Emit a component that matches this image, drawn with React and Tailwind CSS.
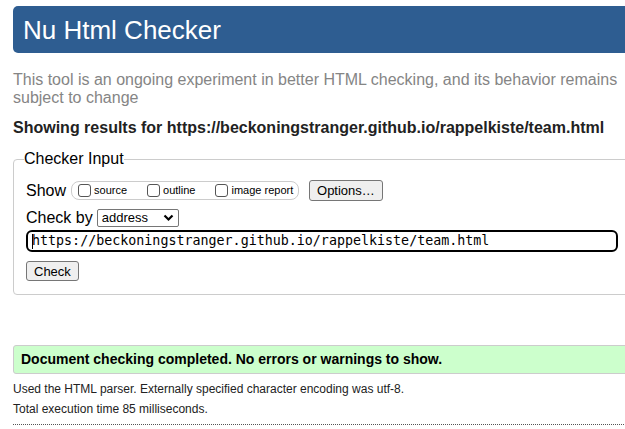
export default function App() {
  return (
    <div className="w-[625px] h-[429px] overflow-hidden bg-white">
      <div className="w-[680px] pl-[13px] pt-[6px] font-['Liberation_Sans',Arial,sans-serif]">
        {/* header */}
        <div className="h-[47px] bg-[#2e5d91] rounded-[5px] pl-[10px] flex items-center">
          <h1 className="text-white text-[26px] leading-none pt-[1px]">Nu Html Checker</h1>
        </div>

        <p className="mt-[18px] w-[608px] text-[16px] leading-[18px] text-[#858585]">
          This tool is an ongoing experiment in better HTML checking, and its behavior remains subject to change
        </p>

        <p className="mt-[11px] text-[16px] leading-[20px] font-bold text-[#222]">
          Showing results for https://beckoningstranger.github.io/rappelkiste/team.html
        </p>

        {/* checker input */}
        <fieldset className="mt-[12px] w-[618px] border border-[#cccccc] rounded-[4px] px-[12px] pb-[11px] pt-0 text-black">
          <legend className="text-[16px] leading-[18px] px-0 ml-[-2px]">Checker Input</legend>
          <div className="flex items-center mt-[12px] h-[21px]">
            <span className="text-[16px] leading-[20px]">Show</span>
            <div className="ml-[5px] w-[228px] h-[19px] border border-[#cccccc] rounded-[8px] flex items-center pl-[6px] text-[11px]">
              <span className="w-[13px] h-[13px] border border-[#555] rounded-[3px] bg-white"></span>
              <span className="ml-[3px]">source</span>
              <span className="ml-[20px] w-[13px] h-[13px] border border-[#555] rounded-[3px] bg-white"></span>
              <span className="ml-[3px]">outline</span>
              <span className="ml-[20px] w-[13px] h-[13px] border border-[#555] rounded-[3px] bg-white"></span>
              <span className="ml-[3px]">image report</span>
            </div>
            <button className="ml-[10px] h-[21px] px-[7px] border border-[#767676] rounded-[3px] bg-[#efefef] text-[13px] leading-none">
              Options…
            </button>
          </div>
          <div className="flex items-center mt-[7px] h-[20px]">
            <span className="text-[16px] leading-[20px]">Check by</span>
            <div className="ml-[4px] w-[82px] h-[18px] border border-[#767676] rounded-[2px] flex items-center justify-between pl-[4px] pr-[4px] text-[13px]">
              <span>address</span>
              <svg width="11" height="8" viewBox="0 0 11 8">
                <path d="M1.5 1.5 L5.5 5.5 L9.5 1.5" fill="none" stroke="black" strokeWidth="2.2" />
              </svg>
            </div>
          </div>
          <div className="mt-[2px] h-[22px] border-2 border-black rounded-[6px] flex items-center pl-[4px] font-['DejaVu_Sans_Mono',monospace] text-[13.33px]">
            <span className="w-[1px] h-[15px] bg-black mr-[-1px]"></span>
            <span>https://beckoningstranger.github.io/rappelkiste/team.html</span>
          </div>
          <button className="mt-[9px] h-[20px] px-[7px] border border-[#767676] rounded-[3px] bg-[#efefef] text-[13px] leading-none">
            Check
          </button>
        </fieldset>

        {/* result */}
        <div className="mt-[50px] h-[29px] bg-[#ccffcc] border border-[#cccccc] rounded-[3px] flex items-center pl-[7px]">
          <span className="text-[14px] font-bold text-black">Document checking completed. No errors or warnings to show.</span>
        </div>
        <p className="mt-[7px] text-[12px] leading-[16px] text-[#222]">
          Used the HTML parser. Externally specified character encoding was utf-8.
        </p>
        <p className="mt-[4px] text-[12px] leading-[16px] text-[#222]">Total execution time 85 milliseconds.</p>
        <div className="mt-[7px] border-t border-dotted border-[#555]"></div>
      </div>
    </div>
  );
}
